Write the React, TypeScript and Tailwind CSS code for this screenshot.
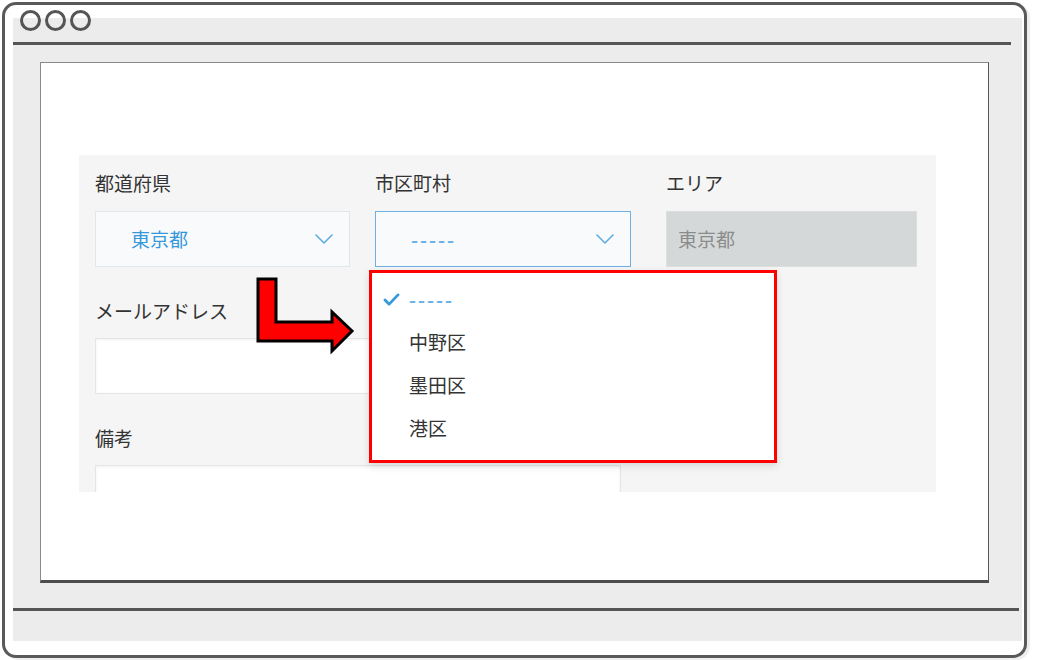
import { FC } from "react";

const jp = { fontFamily: '"Noto Sans CJK JP", "Noto Sans", sans-serif' };

const Chevron: FC = () => (
  <svg viewBox="0 0 18 10" className="w-[18px] h-[10px]">
    <path
      d="M1 1L9 9L17 1"
      fill="none"
      stroke="#5dade2"
      strokeWidth="1.6"
      strokeLinecap="round"
      strokeLinejoin="round"
    />
  </svg>
);

const Check: FC = () => (
  <svg viewBox="0 0 18 14" className="w-[17px] h-[13px]">
    <path
      d="M2 7.5L6.5 12L16 2"
      fill="none"
      stroke="#3498db"
      strokeWidth="3"
      strokeLinecap="round"
      strokeLinejoin="round"
    />
  </svg>
);

const Dashes: FC = () => (
  <span className="text-[19px] font-bold text-[#6cb2e6] tracking-[2px]">-----</span>
);

const Label: FC<{ text: string }> = ({ text }) => (
  <div className="h-[24px] leading-[24px] text-[19px] text-[#333]">{text}</div>
);

const Arrow: FC = () => (
  <svg
    viewBox="0 0 120 90"
    className="absolute left-[171px] top-[115px] w-[120px] h-[90px]"
  >
    <polygon
      points="8,9 26,9 26,52 82,52 82,42 102,61 82,81 82,71 8,71"
      fill="#ff0000"
      stroke="#000"
      strokeWidth="3"
      strokeLinejoin="miter"
    />
  </svg>
);

const Dropdown: FC = () => {
  const items = ["中野区", "墨田区", "港区"];
  return (
    <div className="absolute left-[-6px] top-[99px] w-[408px] h-[193px] bg-white border-[3px] border-[#ff0000] shadow-[0_3px_8px_rgba(0,0,0,0.12)] pt-[5px] pl-[11px]">
      <div className="h-[43px] flex items-center">
        <div className="w-[26px] flex items-center">
          <Check />
        </div>
        <Dashes />
      </div>
      {items.map((it) => (
        <div key={it} className="h-[43px] flex items-center pl-[26px] text-[19px] text-[#333]">
          {it}
        </div>
      ))}
    </div>
  );
};

const FormPanel: FC = () => (
  <div
    className="relative ml-[38px] mt-[92px] w-[857px] h-[337px] bg-[#f5f5f5]"
    style={jp}
  >
    <div className="absolute inset-0 overflow-hidden pt-[16px] pl-[16px]">
      <div className="flex">
        <div className="w-[255px]">
          <Label text="都道府県" />
          <div className="mt-[16px] h-[56px] bg-[#f8fafb] border border-[#e2e6e8] flex items-center justify-between pl-[35px] pr-[16px]">
            <span className="text-[19px] text-[#3498db]">東京都</span>
            <Chevron />
          </div>
        </div>
        <div className="w-[256px] ml-[25px]">
          <Label text="市区町村" />
          <div className="mt-[16px] h-[56px] bg-[#f8fafb] border border-[#6fb0e3] flex items-center justify-between pl-[35px] pr-[16px]">
            <Dashes />
            <Chevron />
          </div>
        </div>
        <div className="w-[251px] ml-[35px]">
          <Label text="エリア" />
          <div className="mt-[16px] h-[56px] bg-[#d5d8d8] border border-[#dcdfdf] flex items-center pl-[11px]">
            <span className="text-[19px] text-[#8a8c8c]">東京都</span>
          </div>
        </div>
      </div>
      <div className="mt-[32px]">
        <Label text="メールアドレス" />
        <div className="mt-[15px] w-[526px] h-[56px] bg-white border border-[#e3e6e6] shadow-[inset_0_1px_3px_rgba(0,0,0,0.06)]" />
      </div>
      <div className="mt-[32px]">
        <Label text="備考" />
        <div className="mt-[15px] w-[526px] h-[90px] bg-white border border-[#e3e6e6] shadow-[inset_0_1px_3px_rgba(0,0,0,0.06)]" />
      </div>
    </div>
    <Arrow />
    <div className="absolute left-[296px] top-[16px] w-[256px] h-[96px]">
      <Dropdown />
    </div>
  </div>
);

export default function App() {
  return (
    <div className="w-[1038px] h-[660px] bg-white overflow-hidden">
      <div className="ml-[2px] mt-[2px] w-[1025px] h-[656px] border-[3px] border-[#595959] rounded-[14px] bg-white pt-[13px] pl-[8px] pr-[2px] pb-[14px] shadow-[3px_2px_0_#eeeeee]">
        <div className="h-full bg-[#ebeceb] flex flex-col">
          <div className="flex gap-[4px] ml-[7px] mt-[-8px] h-[21px]">
            <div className="w-[21px] h-[21px] rounded-full border-[3px] border-[#555]" />
            <div className="w-[21px] h-[21px] rounded-full border-[3px] border-[#555]" />
            <div className="w-[21px] h-[21px] rounded-full border-[3px] border-[#555]" />
          </div>
          <div className="mt-[11px] h-[3px] w-[998px] bg-[#555]" />
          <div className="mt-[17px] ml-[27px] w-[949px] h-[521px] bg-white border border-[#8a8a8a] border-r-[#555] border-b-[3px] border-b-[#4d4d4d]">
            <FormPanel />
          </div>
          <div className="mt-[25px] h-[3px] w-[1006px] bg-[#555]" />
        </div>
      </div>
    </div>
  );
}
